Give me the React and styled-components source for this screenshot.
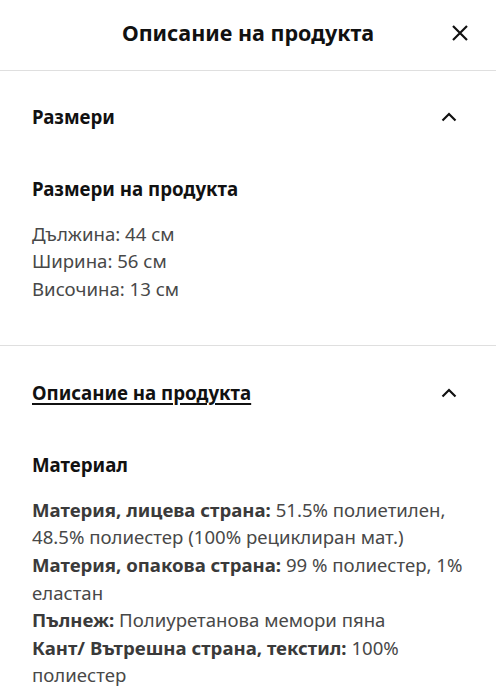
import React from "react";
import styled, { createGlobalStyle } from "styled-components";

const Global = createGlobalStyle`
  html, body { margin: 0; padding: 0; background: #fff; }
  body { font-family: "Noto Sans", "Open Sans", sans-serif; -webkit-font-smoothing: antialiased; }
  * { box-sizing: border-box; }
`;

const Sheet = styled.div`
  width: 496px;
  min-height: 699px;
  background: #fff;
  color: #111;
`;

const Header = styled.header`
  position: relative;
  height: 71px;
  display: flex;
  align-items: center;
  justify-content: center;
  border-bottom: 1px solid #dfdfdf;
`;

const Title = styled.h1`
  margin: 0;
  font-size: 21.5px;
  font-weight: 700;
  line-height: 28px;
  color: #111;
  padding-bottom: 4px;
`;

const CloseButton = styled.button`
  position: absolute;
  right: 24px;
  top: 21px;
  width: 24px;
  height: 24px;
  padding: 0;
  border: 0;
  background: none;
  display: flex;
  align-items: center;
  justify-content: center;
  color: #111;
`;

const Section = styled.section`
  border-bottom: ${(p) => (p.$last ? "0" : "1px solid #dfdfdf")};
  padding: 0 32px ${(p) => (p.$last ? "0" : "43px")};
`;

const AccordionHead = styled.div`
  display: flex;
  align-items: center;
  justify-content: space-between;
  padding-top: ${(p) => (p.$top ? p.$top : 32)}px;
  margin-bottom: 44px;
`;

const AccordionTitle = styled.span`
  font-size: 18.7px;
  font-weight: 700;
  line-height: 28px;
  color: #111;
  text-decoration: ${(p) => (p.$underline ? "underline" : "none")};
  text-underline-offset: 3px;
  text-decoration-thickness: 1.5px;
`;

const Chevron = styled.span`
  display: flex;
  width: 24px;
  height: 24px;
  align-items: center;
  justify-content: center;
  margin-right: 3px;
`;

const SubHeading = styled.h3`
  margin: 0 0 16.5px;
  font-size: 18.7px;
  font-weight: 700;
  line-height: 28px;
  color: #111;
`;

const Lines = styled.div`
  font-size: 18.6px;
  line-height: 27.6px;
  color: #484848;
`;

const Line = styled.div``;

const Label = styled.b`
  font-weight: 700;
  color: #3a3a3a;
`;

const ChevronIcon = () => (
  <svg width="16" height="10" viewBox="0 0 16 10" fill="none">
    <path d="M1.5 8.5L8 2L14.5 8.5" stroke="#111" strokeWidth="2.2" />
  </svg>
);

const CloseIcon = () => (
  <svg width="18" height="18" viewBox="0 0 18 18" fill="none">
    <path d="M2 2L16 16M16 2L2 16" stroke="#111" strokeWidth="2.2" />
  </svg>
);

export default function App() {
  return (
    <Sheet>
      <Global />
      <Header>
        <Title>Описание на продукта</Title>
        <CloseButton aria-label="close">
          <CloseIcon />
        </CloseButton>
      </Header>
      <Section>
        <AccordionHead>
          <AccordionTitle>Размери</AccordionTitle>
          <Chevron>
            <ChevronIcon />
          </Chevron>
        </AccordionHead>
        <SubHeading>Размери на продукта</SubHeading>
        <Lines>
          <Line>Дължина: 44 см</Line>
          <Line>Ширина: 56 см</Line>
          <Line>Височина: 13 см</Line>
        </Lines>
      </Section>
      <Section $last>
        <AccordionHead $top={33}>
          <AccordionTitle $underline>Описание на продукта</AccordionTitle>
          <Chevron>
            <ChevronIcon />
          </Chevron>
        </AccordionHead>
        <SubHeading>Материал</SubHeading>
        <Lines>
          <Line>
            <Label>Материя, лицева страна:</Label> 51.5% полиетилен, 48.5% полиестер (100% рециклиран мат.)
          </Line>
          <Line>
            <Label>Материя, опакова страна:</Label> 99 % полиестер, 1% еластан
          </Line>
          <Line>
            <Label>Пълнеж:</Label> Полиуретанова мемори пяна
          </Line>
          <Line>
            <Label>Кант/ Вътрешна страна, текстил:</Label> 100% полиестер
          </Line>
        </Lines>
      </Section>
    </Sheet>
  );
}
